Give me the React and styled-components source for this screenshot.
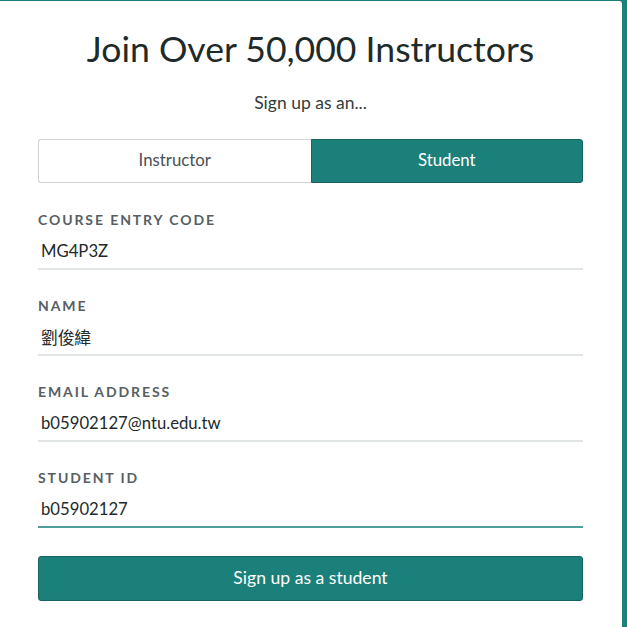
import React from "react";
import styled, { createGlobalStyle } from "styled-components";

const GlobalStyle = createGlobalStyle`
  html, body {
    margin: 0;
    padding: 0;
    background: #1b7f7a;
  }
  body {
    padding-top: 1px;
    font-family: Lato, "Noto Sans", "Noto Sans CJK TC", sans-serif;
  }
`;

const Card = styled.div`
  width: 622px;
  min-height: 700px;
  box-sizing: border-box;
  background: #ffffff;
  border-top-right-radius: 3px;
  padding: 28px 39px 0 38px;
`;

const Title = styled.h1`
  margin: 0;
  text-align: center;
  font-size: 35.6px;
  line-height: 40px;
  font-weight: 400;
  color: #1f2a2a;
`;

const Subtitle = styled.p`
  margin: 24px 0 0;
  text-align: center;
  font-size: 17.5px;
  line-height: 20px;
  color: #333b3b;
`;

const Toggle = styled.div`
  margin-top: 26px;
  display: grid;
  grid-template-columns: 1fr 1fr;
  height: 44px;
`;

const ToggleButton = styled.button`
  font-family: inherit;
  font-size: 16.8px;
  padding: 0 0 3px;
  border: 1px solid ${p => (p.active ? "#17635f" : "#cfd3d8")};
  background: ${p => (p.active ? "#1b7f7a" : "#ffffff")};
  color: ${p => (p.active ? "#ffffff" : "#4a4f55")};
  border-radius: ${p => (p.active ? "0 3px 3px 0" : "3px 0 0 3px")};
  border-right-width: ${p => (p.active ? "1px" : "0")};
  cursor: pointer;
`;

const Form = styled.form`
  margin-top: 29px;
  display: flex;
  flex-direction: column;
  gap: 28px;
`;

const Field = styled.label`
  display: flex;
  flex-direction: column;
`;

const Label = styled.span`
  font-size: 14px;
  line-height: 16px;
  font-weight: 700;
  letter-spacing: 1.9px;
  color: #566063;
`;

const Input = styled.input`
  margin-top: 9px;
  font-family: inherit;
  font-size: 16.7px;
  color: #222a2b;
  border: none;
  border-bottom: 2px solid ${p => (p.focused ? "#4e9e99" : "#e1e5e5")};
  padding: 4px 3px 7px;
  outline: none;
  background: transparent;
`;

const Submit = styled.button`
  margin-top: 28px;
  width: 100%;
  height: 45px;
  padding: 0 0 3px;
  font-family: inherit;
  font-size: 17.6px;
  color: #ffffff;
  background: #1b7f7a;
  border: 1px solid #17635f;
  border-radius: 3px;
  cursor: pointer;
`;

const fields = [
  { label: "COURSE ENTRY CODE", value: "MG4P3Z" },
  { label: "NAME", value: "劉俊緯" },
  { label: "EMAIL ADDRESS", value: "b05902127@ntu.edu.tw" },
  { label: "STUDENT ID", value: "b05902127", focused: true },
];

export default function App() {
  return (
    <>
      <GlobalStyle />
      <Card>
        <Title>Join Over 50,000 Instructors</Title>
        <Subtitle>Sign up as an...</Subtitle>
        <Toggle>
          <ToggleButton type="button">Instructor</ToggleButton>
          <ToggleButton type="button" active>
            Student
          </ToggleButton>
        </Toggle>
        <Form onSubmit={e => e.preventDefault()}>
          {fields.map(f => (
            <Field key={f.label}>
              <Label>{f.label}</Label>
              <Input defaultValue={f.value} focused={f.focused} />
            </Field>
          ))}
        </Form>
        <Submit type="button">Sign up as a student</Submit>
      </Card>
    </>
  );
}
